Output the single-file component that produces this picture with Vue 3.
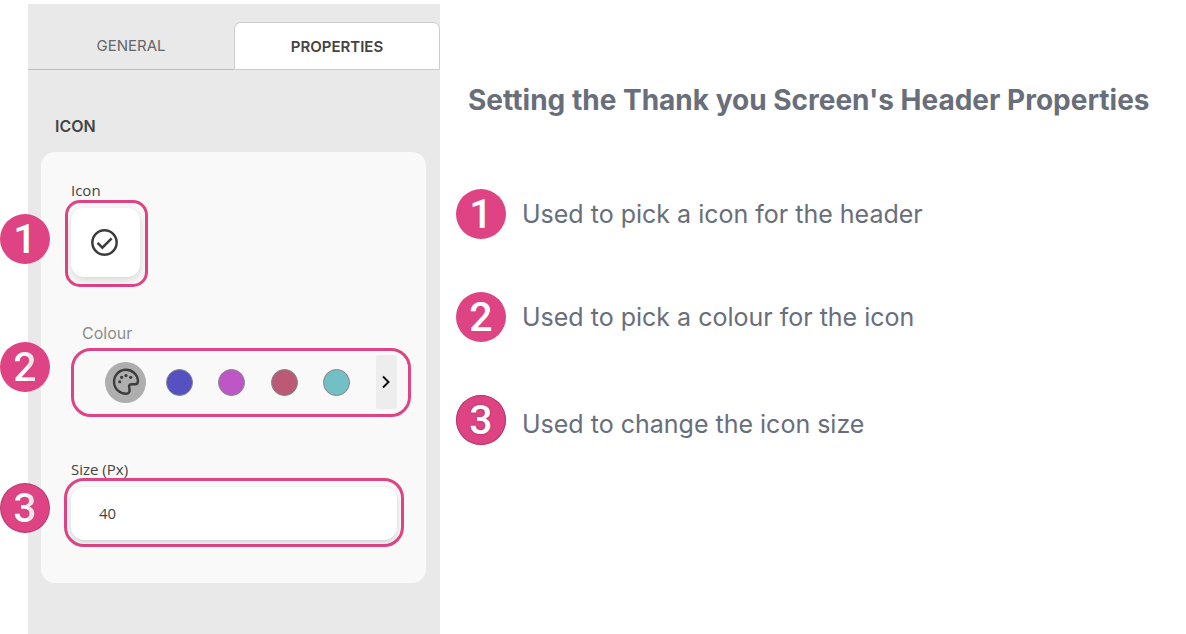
<script setup>
import { ref } from 'vue'

const size = ref('40')
const swatches = [
  { name: 'Indigo', tone: 'indigo' },
  { name: 'Orchid', tone: 'orchid' },
  { name: 'Rose', tone: 'rose' },
  { name: 'Aqua', tone: 'aqua' },
]
const notes = [
  'Used to pick a icon for the header',
  'Used to pick a colour for the icon',
  'Used to change the icon size',
]
</script>

<template>
  <main class="page">
    <aside class="panel">
      <nav class="tabs" role="tablist">
        <button class="tab" role="tab" type="button" aria-selected="false">GENERAL</button>
        <button class="tab active" role="tab" type="button" aria-selected="true">PROPERTIES</button>
      </nav>

      <h2 class="section">ICON</h2>

      <div class="card">
        <div class="field field-icon">
          <span class="badge pin pin-1">1</span>
          <label class="label" for="icon-picker">Icon</label>
          <div class="frame frame-icon">
            <button id="icon-picker" class="icon-picker" type="button">
              <svg width="27" height="27" viewBox="0 0 28 28" fill="none" stroke="#3c3c3c" stroke-width="2.6" aria-hidden="true">
                <circle cx="14" cy="14" r="12.600" />
                <path d="M6.800 14.400l5 5 9.600-9.800" />
              </svg>
            </button>
          </div>
        </div>

        <div class="field field-colour">
          <span class="badge pin pin-2 see-through">2</span>
          <span id="colour-label" class="label label-colour">Colour</span>
          <div class="frame frame-colour" role="group" aria-labelledby="colour-label">
            <button class="palette" type="button" aria-label="Custom colour">
              <svg width="32" height="32" viewBox="0 0 24 24" fill="none" stroke="#3c3c3c" stroke-width="1.8" stroke-linejoin="round" aria-hidden="true">
                <path d="M12.500 20.800a9 9 0 1 1 8.500-9.600c0 1.700-.9 2.500-2.300 2.500h-2.400c-1.700 0-2.300 1.100-1.900 2.500.6 2 .4 4.400-1.900 4.600z" />
                <g fill="#3c3c3c" stroke="none">
                  <circle cx="7.300" cy="11.800" r="1.200" />
                  <circle cx="8.700" cy="8.500" r="1.200" />
                  <circle cx="12" cy="7.200" r="1.200" />
                  <circle cx="15.500" cy="8.500" r="1.200" />
                </g>
              </svg>
            </button>
            <button v-for="s in swatches" :key="s.tone" class="swatch" :class="s.tone" type="button" :aria-label="s.name"></button>
            <button class="next" type="button" aria-label="More colours">
              <svg width="10" height="14" viewBox="0 0 10 14" fill="none" stroke="#111" stroke-width="2" aria-hidden="true">
                <path d="M2 1.500l5.500 5.500L2 12.500" />
              </svg>
            </button>
          </div>
        </div>

        <div class="field field-size">
          <span class="badge pin pin-3 outlined see-through">3</span>
          <label class="label" for="icon-size">Size (Px)</label>
          <div class="frame frame-size">
            <input id="icon-size" v-model="size" class="size-input" type="text" inputmode="numeric" />
          </div>
        </div>
      </div>
    </aside>

    <section class="guide">
      <h1 class="title">Setting the Thank you Screen's Header Properties</h1>
      <ol class="notes">
        <li v-for="(note, i) in notes" :key="note" class="note">
          <span class="badge" :class="{ outlined: i === 2 }">{{ i + 1 }}</span>
          <span class="note-text">{{ note }}</span>
        </li>
      </ol>
    </section>
  </main>
</template>

<style>
body {
  background: #fff;
}
</style>

<style scoped>
* {
  box-sizing: border-box;
}

button,
input {
  margin: 0;
  padding: 0;
  border: 0;
  font-family: inherit;
}

.page {
  display: grid;
  grid-template-columns: 440fr 746fr;
  min-height: 100vh;
  font-family: Inter, sans-serif;
}

.panel {
  margin: 4px 0 0 28px;
  padding-top: 18px;
  background: #e9e9e9;
  color: #444;
}

.tabs {
  display: grid;
  grid-template-columns: 1fr 1fr;
  height: 48px;
}

.tab {
  background: none;
  border-bottom: 1px solid #bebebe;
  color: #666;
  font-size: 15px;
}

.tab.active {
  background: #fff;
  border: 1px solid #ccc;
  border-radius: 7px 7px 0 0;
  color: #444;
  font-weight: 600;
}

.section {
  margin: 46px 0 16px 27px;
  color: #444;
  font-size: 16px;
  font-weight: 600;
  line-height: 20px;
}

.card {
  margin: 0 14px 0 13px;
  padding: 30px 0 36px;
  background: #f9f9f9;
  border-radius: 14px;
}

.field {
  position: relative;
}

.field-colour {
  margin-top: 38px;
}

.field-size {
  margin-top: 44px;
}

.label {
  display: block;
  margin-left: 30px;
  color: #444;
  font-family: "Open Sans", sans-serif;
  font-size: 15px;
  line-height: 16px;
}

.label-colour {
  margin-left: 41px;
  color: #8c8c8c;
  font-family: Inter, sans-serif;
  font-size: 16px;
}

.frame {
  border: 3px solid #de4383;
}

.frame-icon {
  width: fit-content;
  margin: 2px 0 0 24px;
  padding: 5px 5px 7px 3px;
  border-radius: 15px;
}

.icon-picker {
  display: grid;
  place-items: center;
  width: 69px;
  height: 69px;
  padding-right: 2px;
  background: #fff;
  border-radius: 13px;
  box-shadow: 0 3px 8px rgba(0, 0, 0, 0.14);
}

.frame-colour {
  display: flex;
  align-items: center;
  justify-content: space-between;
  margin: 7px 15px 0 30px;
  padding: 4px 11px 5px 31px;
  border-radius: 20px;
}

.palette {
  display: grid;
  place-items: center;
  width: 41px;
  height: 41px;
  margin-right: -6px;
  background: #aeaeae;
  border-radius: 50%;
}

.swatch {
  width: 27px;
  height: 27px;
  border: 1px solid #858585;
  border-radius: 50%;
}

.indigo {
  background: #5551c1;
}

.orchid {
  background: #bd57c5;
}

.rose {
  background: #bb5977;
}

.aqua {
  background: #72c0c6;
}

.next {
  display: grid;
  place-items: center;
  width: 21px;
  height: 54px;
  background: #ededed;
  border-radius: 2px;
}

.frame-size {
  margin: 1px 22px 0 23px;
  padding: 6px 4px 4px;
  border-radius: 20px;
}

.size-input {
  display: block;
  width: 100%;
  height: 53px;
  padding: 0 28px 2px;
  background: #fff;
  border-radius: 13px;
  box-shadow: 0 2px 5px rgba(0, 0, 0, 0.18);
  color: #444;
  font-family: "Open Sans", sans-serif;
  font-size: 15px;
}

.badge {
  flex: none;
  width: 50px;
  height: 50px;
  border-radius: 50%;
  background: #de4383;
  color: #fff;
  font-family: Roboto, sans-serif;
  font-size: 41px;
  font-weight: 500;
  line-height: 50px;
  text-align: center;
}

.outlined {
  box-shadow: inset 0 0 0 1px #b53a6d;
  text-shadow: 0 0 2px #8d2f57;
}

.see-through {
  background-color: #de4383;
  background-image: linear-gradient(90deg, #fff 28px, #e9e9e9 28px), linear-gradient(#de4383, #de4383);
  background-clip: text, border-box;
  color: transparent;
  text-shadow: none;
}

.pin {
  position: absolute;
  left: -41px;
}

.pin-1 {
  top: 32px;
}

.pin-2 {
  top: 17px;
}

.pin-3 {
  top: 22px;
}

.guide {
  padding: 84px 16px 0;
  color: #686e7a;
}

.title {
  margin: 0 0 73px 12px;
  font-size: 28px;
  font-weight: 700;
  line-height: 32px;
}

.notes {
  display: grid;
  gap: 53px;
  margin: 0;
  padding: 0;
  list-style: none;
}

.note {
  display: flex;
  align-items: center;
  gap: 16px;
  font-size: 25px;
  font-weight: 400;
}

.note:last-child .note-text {
  padding-top: 8px;
}
</style>
